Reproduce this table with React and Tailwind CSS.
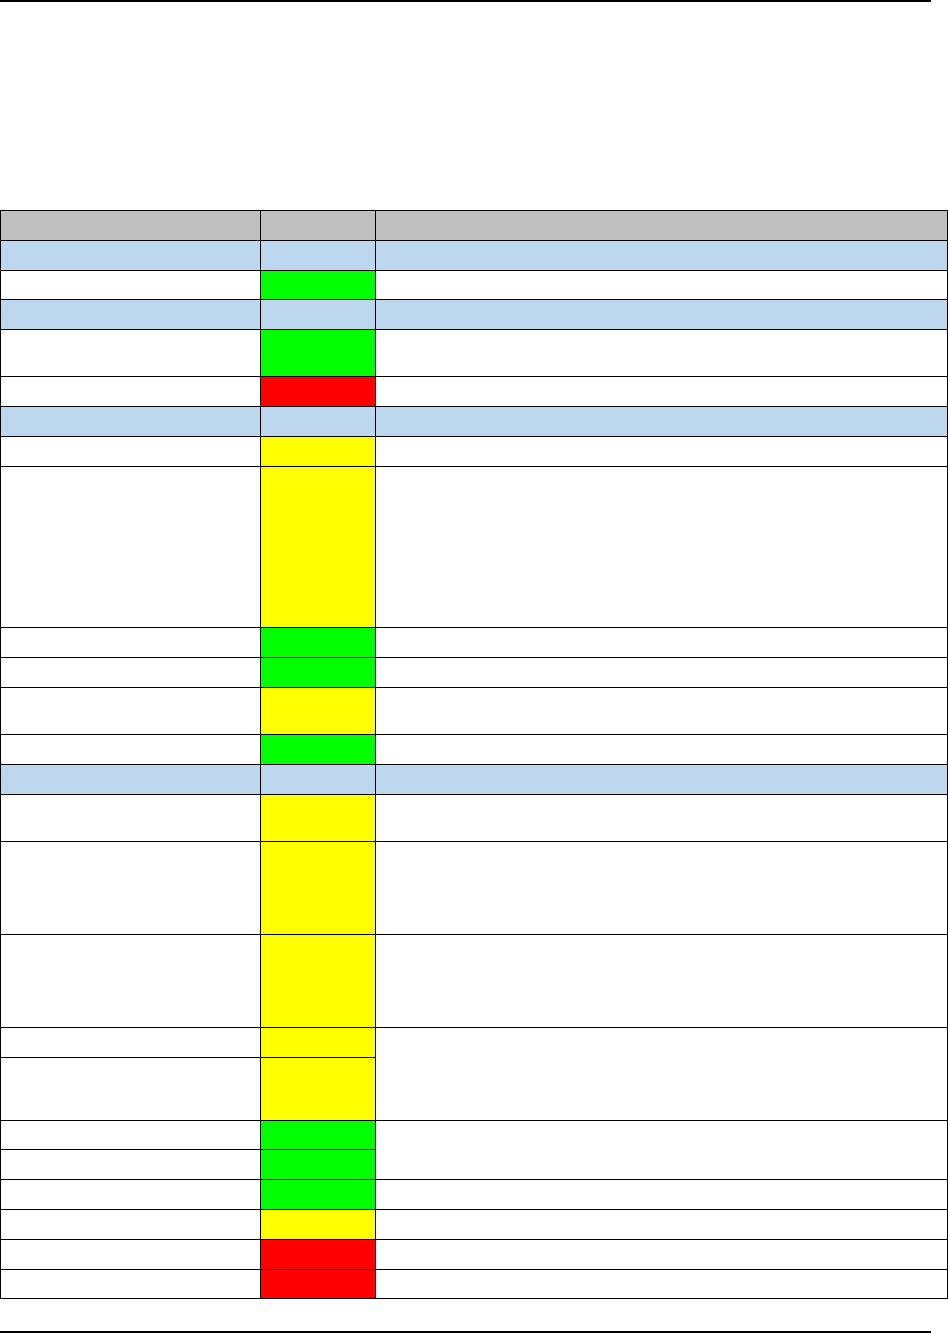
const W = "bg-white";
const B = "bg-[#bdd7ee]";
const G = "bg-[#00ff00]";
const R = "bg-[#ff0000]";
const Y = "bg-[#ffff00]";
const H = "bg-[#c0c0c0]";

// each row: [col1, col2, col3 or null if merged from above, span of col3]
const rows = [
  [H, H, H, 1],
  [B, B, B, 1],
  [W, G, W, 1],
  [B, B, B, 1],
  [W, G, W, 1],
  [W, R, W, 1],
  [B, B, B, 1],
  [W, Y, W, 1],
  [W, Y, W, 1],
  [W, G, W, 1],
  [W, G, W, 1],
  [W, Y, W, 1],
  [W, G, W, 1],
  [B, B, B, 1],
  [W, Y, W, 1],
  [W, Y, W, 1],
  [W, Y, W, 1],
  [W, Y, W, 2],
  [W, Y, null, 0],
  [W, G, W, 2],
  [W, G, null, 0],
  [W, G, W, 1],
  [W, Y, W, 1],
  [W, R, W, 1],
  [W, R, W, 1],
];

export default function App() {
  return (
    <div className="w-[948px] h-[1334px] bg-white flex flex-col font-['Liberation_Sans',sans-serif]">
      <div className="h-[2px] w-[931px] bg-black shrink-0" />
      <div className="h-[208px] shrink-0" />
      <div className="grid grid-cols-[259px_114px_571px] grid-rows-[29px_29px_28px_29px_46px_29px_29px_29px_160px_29px_29px_46px_29px_29px_46px_92px_92px_29px_62px_28px_29px_29px_29px_29px_28px] gap-px p-px bg-black w-[948px] shrink-0">
        {rows.map((r, i) => (
          <Row key={i} r={r} />
        ))}
      </div>
      <div className="flex-1" />
      <div className="h-[2px] w-[931px] bg-black shrink-0 mb-px" />
    </div>
  );
}

function Row({ r }) {
  const [c1, c2, c3, span] = r;
  return (
    <>
      <div className={c1} />
      <div className={c2} />
      {c3 && <div className={`${c3} ${span === 2 ? "row-span-2" : ""}`} />}
    </>
  );
}
